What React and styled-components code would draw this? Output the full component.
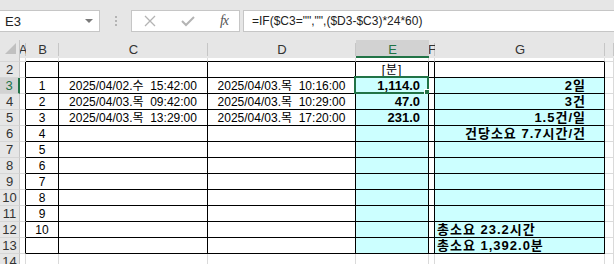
import React from "react";
import styled, { createGlobalStyle } from "styled-components";

// Sheet geometry (px)
const colWidths = [20, 6, 33, 149, 148, 73, 6, 170];
const colLabels = ["", "A", "B", "C", "D", "E", "F", "G", ""];

const GRID = "#dadada";
const LINE = "#000";
const CYAN = "#ccffff";
const GREEN = "#217346";
const HEAD_BG = "#e6e6e6";
const HEAD_SEL = "#d2d2d2";

const rows = [
  { n: 2, b: "", c: "", d: "", e: "[분]", g: "" },
  { n: 3, b: "1", c: "2025/04/02.수  15:42:00", d: "2025/04/03.목  10:16:00", e: "1,114.0", g: "2일" },
  { n: 4, b: "2", c: "2025/04/03.목  09:42:00", d: "2025/04/03.목  10:29:00", e: "47.0", g: "3건" },
  { n: 5, b: "3", c: "2025/04/03.목  13:29:00", d: "2025/04/03.목  17:20:00", e: "231.0", g: "1.5건/일" },
  { n: 6, b: "4", c: "", d: "", e: "", g: "건당소요 7.7시간/건" },
  { n: 7, b: "5", c: "", d: "", e: "", g: "" },
  { n: 8, b: "6", c: "", d: "", e: "", g: "" },
  { n: 9, b: "7", c: "", d: "", e: "", g: "" },
  { n: 10, b: "8", c: "", d: "", e: "", g: "" },
  { n: 11, b: "9", c: "", d: "", e: "", g: "" },
  { n: 12, b: "10", c: "", d: "", e: "", g: "총소요 23.2시간", left: true },
  { n: 13, b: "", c: "", d: "", e: "", g: "총소요 1,392.0분", left: true },
  { n: 14, b: "", c: "", d: "", e: "", g: "" },
];

const GlobalStyle = createGlobalStyle`
  html, body {
    margin: 0;
    padding: 0;
    background: #fff;
    overflow: hidden;
  }
  body {
    font-family: "Liberation Sans", "Noto Sans CJK KR", sans-serif;
  }
`;

const Window = styled.div`
  width: 614px;
  height: 264px;
  overflow: hidden;
  background: #fff;
`;

// Formula bar
const Toolbar = styled.div`
  display: flex;
  align-items: flex-start;
  height: 40px;
  padding-top: 10px;
  box-sizing: border-box;
  background: ${HEAD_BG};
`;

const NameBox = styled.div`
  display: flex;
  align-items: center;
  justify-content: space-between;
  width: 100px;
  height: 22px;
  box-sizing: border-box;
  padding: 0 6px 0 5px;
  background: #fff;
  border: 1px solid #c6c6c6;
  border-left: none;
  font-size: 13px;
  color: #222;
`;

const DropArrow = styled.span`
  width: 0;
  height: 0;
  border-left: 4px solid transparent;
  border-right: 4px solid transparent;
  border-top: 4px solid #7a7a7a;
`;

const Grip = styled.div`
  display: flex;
  flex-direction: column;
  gap: 2px;
  margin: 6px 14px 0 15px;
  span {
    width: 2px;
    height: 2px;
    background: #b4b4b4;
  }
`;

const FnBox = styled.div`
  display: flex;
  align-items: center;
  justify-content: space-between;
  width: 109px;
  height: 22px;
  box-sizing: border-box;
  padding: 0 11px 0 12px;
  background: #fff;
  border: 1px solid #c6c6c6;
`;

const FxLabel = styled.span`
  font-family: "Liberation Serif", serif;
  font-style: italic;
  font-size: 14px;
  color: #555;
  letter-spacing: -1px;
`;

const FormulaBox = styled.div`
  flex: 1;
  height: 22px;
  margin-left: 3px;
  box-sizing: border-box;
  padding-left: 8px;
  display: flex;
  align-items: center;
  background: #fff;
  border: 1px solid #c6c6c6;
  border-right: none;
  font-size: 12px;
  color: #222;
  white-space: pre;
`;

// Sheet grid
const Sheet = styled.div`
  display: grid;
  grid-template-columns: ${colWidths.map((w) => w + "px").join(" ")} 1fr;
  grid-template-rows: 18px 4px repeat(13, 16px);
`;

const ColHead = styled.div`
  display: flex;
  align-items: center;
  justify-content: center;
  overflow: hidden;
  font-size: 13px;
  color: ${(p) => (p.$sel ? GREEN : "#333")};
  background: ${(p) =>
    p.$sel
      ? HEAD_SEL
      : `linear-gradient(#c6c6c6, #c6c6c6) right 3px / 1px calc(100% - 3px) no-repeat, ${HEAD_BG}`};
  border-bottom: 2px solid ${(p) => (p.$sel ? GREEN : HEAD_BG)};
  box-sizing: border-box;
  padding-top: 2px;
`;

const Corner = styled.div`
  background: ${HEAD_BG};
  border-right: 1px solid #c6c6c6;
  display: flex;
  align-items: flex-end;
  justify-content: flex-end;
  padding: 0 3px 4px 0;
  box-sizing: border-box;
  span {
    width: 0;
    height: 0;
    border-left: 11px solid transparent;
    border-bottom: 11px solid #c0c0c0;
  }
`;

const RowHead = styled.div`
  display: flex;
  align-items: flex-end;
  justify-content: center;
  overflow: hidden;
  font-size: 13px;
  line-height: 15px;
  color: ${(p) => (p.$sel ? GREEN : "#333")};
  background: ${(p) => (p.$sel ? HEAD_SEL : HEAD_BG)};
  border-right: ${(p) => (p.$sel ? `2px solid ${GREEN}` : "1px solid #c6c6c6")};
  border-bottom: 1px solid #d6d6d6;
  box-sizing: border-box;
`;

const Cell = styled.div`
  position: relative;
  display: flex;
  align-items: flex-end;
  justify-content: ${(p) => p.$align || "center"};
  box-sizing: border-box;
  padding: ${(p) => p.$pad || "0"};
  background: ${(p) => p.$bg || "#fff"};
  border-right: 1px solid ${(p) => p.$right || GRID};
  border-bottom: 1px solid ${(p) => p.$bottom || GRID};
  font-size: ${(p) => (p.$bold ? "13px" : "12px")};
  font-weight: ${(p) => (p.$bold ? 700 : 400)};
  letter-spacing: ${(p) => p.$spacing || "0"};
  line-height: 14px;
  color: #000;
  white-space: pre;
  overflow: visible;
`;

const Selection = styled.div`
  position: absolute;
  top: -2px;
  left: -2px;
  right: -1px;
  bottom: -1px;
  border: 2px solid ${GREEN};
  pointer-events: none;
`;

const FillHandle = styled.div`
  position: absolute;
  right: -4px;
  bottom: -4px;
  width: 5px;
  height: 5px;
  background: ${GREEN};
  border: 1px solid #fff;
`;

const inTable = (r, c) => r >= 2 && r <= 13 && c >= 2 && c <= 7;

const cellStyle = (r, c) => {
  const right = r >= 2 && r <= 13 && c >= 1 && c <= 7 ? LINE : GRID;
  const bottom = r >= 1 && r <= 13 && c >= 2 && c <= 7 ? LINE : GRID;
  const bg = r >= 3 && r <= 13 && (c === 5 || c === 7) ? CYAN : "#fff";
  return { right, bottom, bg };
};

const CrossIcon = () => (
  <svg width="12" height="12" viewBox="0 0 12 12">
    <path d="M1 1 L11 11 M11 1 L1 11" stroke="#b4b4b4" strokeWidth="1.3" fill="none" />
  </svg>
);

const CheckIcon = () => (
  <svg width="14" height="12" viewBox="0 0 14 12">
    <path d="M1 6 L5 10 L13 2" stroke="#b4b4b4" strokeWidth="2" fill="none" />
  </svg>
);

const renderValue = (row, c) => {
  if (c === 2) return row.b;
  if (c === 3) return row.c;
  if (c === 4) return row.d;
  if (c === 5) return row.e;
  if (c === 7) return row.g;
  return "";
};

export default function App() {
  const sheetCells = [];

  // column header row
  colLabels.forEach((label, c) => {
    if (c === 0) {
      sheetCells.push(
        <Corner key="corner">
          <span />
        </Corner>
      );
    } else {
      sheetCells.push(
        <ColHead key={"h" + c} $sel={c === 5}>
          {label}
        </ColHead>
      );
    }
  });

  // row 1 is almost hidden
  colLabels.forEach((_, c) => {
    if (c === 0) {
      sheetCells.push(<RowHead key="r1h" />);
    } else {
      const s = cellStyle(1, c);
      sheetCells.push(<Cell key={"r1c" + c} $right={s.right} $bottom={s.bottom} />);
    }
  });

  rows.forEach((row) => {
    const r = row.n;
    colLabels.forEach((_, c) => {
      if (c === 0) {
        sheetCells.push(
          <RowHead key={"rh" + r} $sel={r === 3}>
            {r}
          </RowHead>
        );
        return;
      }
      const s = cellStyle(r, c);
      const bold = inTable(r, c) && (c === 5 || c === 7) && r >= 3;
      let align = "center";
      let pad = "0";
      let spacing = "0";
      if (r === 2 && c === 5) spacing = "1px";
      if (bold && c === 5) {
        align = "flex-end";
        pad = "0 8px 0 0";
      }
      if (bold && c === 7) {
        align = row.left ? "flex-start" : "flex-end";
        pad = row.left ? "0 0 0 2px" : "0 18px 0 0";
        spacing = "1px";
      }
      sheetCells.push(
        <Cell
          key={"r" + r + "c" + c}
          $right={s.right}
          $bottom={s.bottom}
          $bg={s.bg}
          $bold={bold}
          $align={align}
          $pad={pad}
          $spacing={spacing}
        >
          {renderValue(row, c)}
          {r === 3 && c === 5 && (
            <Selection>
              <FillHandle />
            </Selection>
          )}
        </Cell>
      );
    });
  });

  return (
    <Window>
      <GlobalStyle />
      <Toolbar>
        <NameBox>
          E3
          <DropArrow />
        </NameBox>
        <Grip>
          <span />
          <span />
          <span />
        </Grip>
        <FnBox>
          <CrossIcon />
          <CheckIcon />
          <FxLabel>fx</FxLabel>
        </FnBox>
        <FormulaBox>{'=IF($C3="","",($D3-$C3)*24*60)'}</FormulaBox>
      </Toolbar>
      <Sheet>{sheetCells}</Sheet>
    </Window>
  );
}
